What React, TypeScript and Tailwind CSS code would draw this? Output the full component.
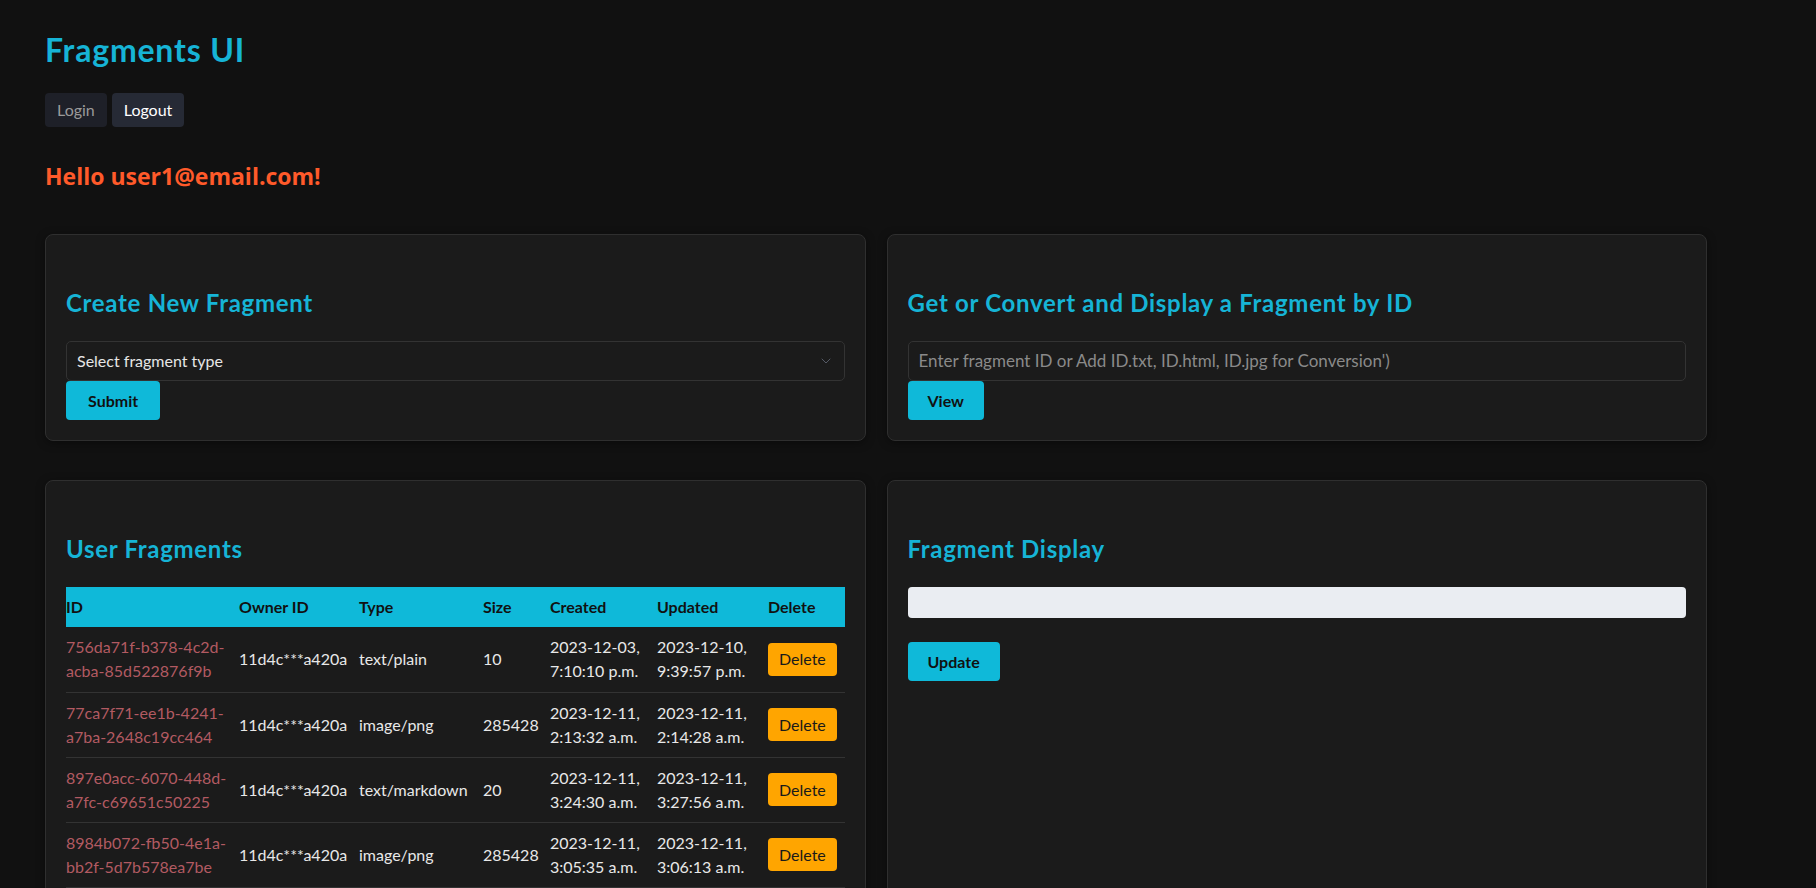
import { ChevronDown } from 'lucide-react';

const fragments = [
  { id: ['756da71f-b378-4c2d-', 'acba-85d522876f9b'], owner: '11d4c***a420a', type: 'text/plain', size: '10', created: ['2023-12-03,', '7:10:10 p.m.'], updated: ['2023-12-10,', '9:39:57 p.m.'] },
  { id: ['77ca7f71-ee1b-4241-', 'a7ba-2648c19cc464'], owner: '11d4c***a420a', type: 'image/png', size: '285428', created: ['2023-12-11,', '2:13:32 a.m.'], updated: ['2023-12-11,', '2:14:28 a.m.'] },
  { id: ['897e0acc-6070-448d-', 'a7fc-c69651c50225'], owner: '11d4c***a420a', type: 'text/markdown', size: '20', created: ['2023-12-11,', '3:24:30 a.m.'], updated: ['2023-12-11,', '3:27:56 a.m.'] },
  { id: ['8984b072-fb50-4e1a-', 'bb2f-5d7b578ea7be'], owner: '11d4c***a420a', type: 'image/png', size: '285428', created: ['2023-12-11,', '3:05:35 a.m.'], updated: ['2023-12-11,', '3:06:13 a.m.'] },
];

function Card({ title, children }: { title: string; children: React.ReactNode }) {
  return (
    <div className="rounded-lg border border-[#2f2f2f] bg-[#1b1b1b] px-5 pt-[52px] pb-5 shadow-[0_2px_10px_rgba(0,0,0,0.4)]">
      <h2 className="mb-[22px] text-[24px] leading-8 font-bold tracking-[0.7px] text-[#16b4d6]">{title}</h2>
      {children}
    </div>
  );
}

export default function App() {
  return (
    <div className="min-h-screen bg-[#111111] text-[#e8e8e8] font-['Lato','Noto_Sans',sans-serif]">
      <div className="px-[45px] pt-[26px] pb-10">
        <h1 className="text-[32px] leading-[48px] font-bold tracking-[0.8px] text-[#16b4d6]">Fragments UI</h1>

        <div className="mt-[19px] flex gap-[5px]">
          <button className="h-[34px] rounded-[4px] bg-[#1e2028] px-[12px] text-[16px] text-[#9a9a9a]">Login</button>
          <button className="h-[34px] rounded-[4px] bg-[#262a35] px-[12px] text-[16px] text-white">Logout</button>
        </div>

        <h3 className="mt-[35px] font-['Open_Sans',sans-serif] text-[23px] leading-7 font-bold text-[#ff5a2a]">Hello user1@email.com!</h3>

        <div className="mt-[44px] grid w-[1662px] grid-cols-2 items-start gap-x-[21px] gap-y-[39px]">
          <Card title="Create New Fragment">
            <div className="relative flex h-[40px] items-center rounded-[5px] border border-[#333] bg-[#1b1b1b] pl-[10px] text-[16px] text-[#e6e6e6]">
              Select fragment type
              <ChevronDown className="absolute right-[10px] h-4 w-4 text-[#555a66]" strokeWidth={1.5} />
            </div>
            <button className="h-[39px] rounded-[4px] bg-[#0fb9d9] px-[22px] text-[16px] font-bold text-[#111]">Submit</button>
          </Card>

          <Card title="Get or Convert and Display a Fragment by ID">
            <div className="flex h-[40px] items-center rounded-[5px] border border-[#333] bg-[#1b1b1b] pl-[10px] text-[17px] text-[#8a8a8a]">
              Enter fragment ID or Add ID.txt, ID.html, ID.jpg for Conversion')
            </div>
            <button className="h-[39px] rounded-[4px] bg-[#0fb9d9] px-[20px] text-[16px] font-bold text-[#111]">View</button>
          </Card>

          <Card title="User Fragments">
            <table className="w-full table-fixed border-collapse text-left text-[16px]">
              <colgroup>
                <col className="w-[173px]" />
                <col className="w-[120px]" />
                <col className="w-[124px]" />
                <col className="w-[67px]" />
                <col className="w-[107px]" />
                <col className="w-[111px]" />
                <col />
              </colgroup>
              <thead>
                <tr className="h-[40px] bg-[#0fb9d9] text-[#111]">
                  <th className="font-bold">ID</th>
                  <th className="font-bold">Owner ID</th>
                  <th className="font-bold">Type</th>
                  <th className="font-bold">Size</th>
                  <th className="font-bold">Created</th>
                  <th className="font-bold">Updated</th>
                  <th className="font-bold">Delete</th>
                </tr>
              </thead>
              <tbody>
                {fragments.map((f) => (
                  <tr key={f.id[0]} className="h-[65px] border-b border-[#333] leading-6">
                    <td className="text-[#b25a62]">
                      {f.id[0]}
                      <br />
                      {f.id[1]}
                    </td>
                    <td>{f.owner}</td>
                    <td>{f.type}</td>
                    <td>{f.size}</td>
                    <td>
                      {f.created[0]}
                      <br />
                      {f.created[1]}
                    </td>
                    <td>
                      {f.updated[0]}
                      <br />
                      {f.updated[1]}
                    </td>
                    <td>
                      <button className="h-[33px] rounded-[4px] bg-[#ffa500] px-[11px] text-[16px] text-[#1a1a1a]">Delete</button>
                    </td>
                  </tr>
                ))}
              </tbody>
            </table>
          </Card>

          <Card title="Fragment Display">
            <div className="h-[31px] rounded-[4px] bg-[#eaedf2]"></div>
            <button className="mt-[24px] h-[39px] rounded-[4px] bg-[#0fb9d9] px-[20px] text-[16px] font-bold text-[#111]">Update</button>
            <div className="h-[260px]"></div>
          </Card>
        </div>
      </div>
    </div>
  );
}
